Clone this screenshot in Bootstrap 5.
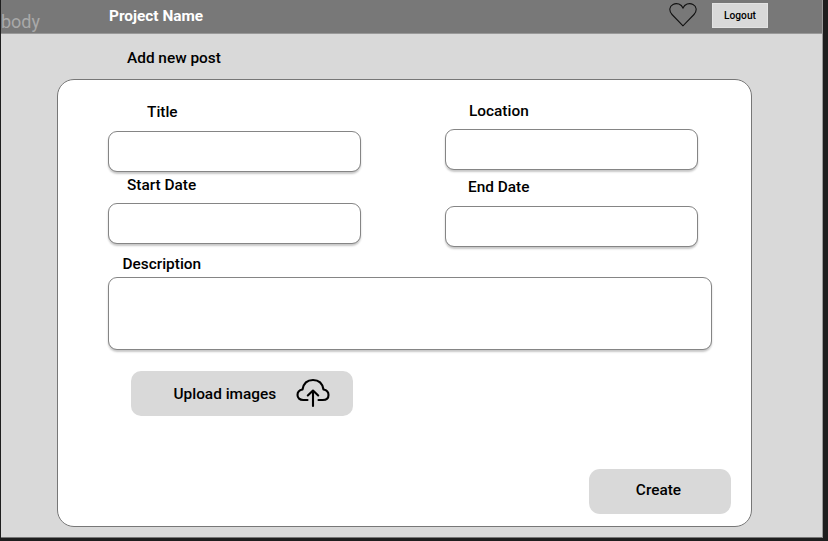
<!DOCTYPE html>
<html lang="en">
<head>
<meta charset="utf-8">
<meta name="viewport" content="width=device-width, initial-scale=1">
<title>Add new post</title>
<link href="https://cdn.jsdelivr.net/npm/bootstrap@5.3.0/dist/css/bootstrap.min.css" rel="stylesheet">
<style>
body{background:#1e1e1e;font-family:Roboto,sans-serif;font-size:15.4px;font-weight:500;line-height:20px;color:#000;height:541px;overflow:hidden}
.page{width:822px;height:538px;margin-left:1px;background:#d9d9d9;border-right:1px solid #999;border-bottom:1px solid #777}
.topbar{height:34px;background:#787878;border-bottom:1px solid #999;padding:0 54px 0 0}
.watermark{font-size:18px;font-weight:400;color:#a9a9a9;width:108px;padding-top:8px}
.brand{font-size:15.4px;font-weight:700;color:#fff;padding-top:9px}
.heart{margin-top:3px}
.btn-logout{width:56px;height:25px;margin:3px 0 0 15px;font-size:10.2px;font-weight:500;line-height:12px;background:#d9d9d9;border:1px solid #e3e3e3;color:#000}
.heading{font-size:15.4px;font-weight:500;line-height:20px;margin:14px 0 11px 126px}
.panel{width:695px;height:448px;margin-left:56px;border:1px solid #777;border-radius:17px;background:#fff;padding:0 20px 12px 50px}
.col-left{width:253px;padding-top:22px}
.col-right{width:253px;margin-left:84px;padding-top:21px}
.form-label{line-height:20px;margin:0;display:block}
.field{height:41px;border:1px solid #858585;border-radius:9px;box-shadow:0 2px 2px rgba(0,0,0,.22);padding:4px 12px;resize:none}
.l-title{margin:0 0 9px 39px}
.l-start{margin:3px 0 8px 19px}
.l-loc{margin:0 0 8px 24px}
.l-end{margin:7px 0 9px 23px}
.l-desc{margin:7px 0 3px 14.5px}
.field-tall{width:604px;height:73px}
.btn-soft{background:#d9d9d9;color:#000;border:0;border-radius:10px;font-size:15.4px;font-weight:500;line-height:20px}
.btn-upload{width:222px;height:45px;margin:21px 0 0 22.5px;padding:0 23px 0 43px}
.btn-upload svg{margin-bottom:2px}
.btn-create{width:142px;height:45px;border-radius:11px;padding:0 3px 3px 0}
</style>
<script src="https://cdn.jsdelivr.net/npm/bootstrap@5.3.0/dist/js/bootstrap.bundle.min.js"></script>
</head>
<body>
<div class="page">
  <header class="topbar d-flex align-items-start">
    <span class="watermark lh-base">body</span>
    <span class="brand me-auto lh-1">Project Name</span>
    <svg class="heart" width="28" height="24" viewBox="0 0 28 24" fill="none" stroke="#111" stroke-width="1.1"><path d="M14 22.800 3 11.500C-.3 8 .3 3.200 4 1.400 8-.4 12.300 1.200 14 5 15.700 1.200 20-.4 24 1.400 27.700 3.200 28.300 8 25 11.500Z"/></svg>
    <button class="btn btn-logout rounded-0 p-0" type="button">Logout</button>
  </header>
  <h1 class="heading">Add new post</h1>
  <form class="panel d-flex flex-column align-items-start">
    <div class="d-flex">
      <div class="col-left">
        <label class="form-label l-title" for="t">Title</label>
        <input class="form-control field" id="t">
        <label class="form-label l-start" for="s">Start Date</label>
        <input class="form-control field" id="s">
      </div>
      <div class="col-right">
        <label class="form-label l-loc" for="l">Location</label>
        <input class="form-control field" id="l">
        <label class="form-label l-end" for="e">End Date</label>
        <input class="form-control field" id="e">
      </div>
    </div>
    <label class="form-label l-desc" for="d">Description</label>
    <textarea class="form-control field field-tall" id="d"></textarea>
    <button class="btn btn-soft btn-upload d-flex align-items-center justify-content-between" type="button">Upload images
      <svg width="34" height="30" viewBox="0 0 34 30" fill="none" stroke="#000" stroke-width="2.100" stroke-linecap="round" stroke-linejoin="round"><path d="M11.500 22H7.200C3.700 22 1.500 20 1.500 17S4 12 6.500 11.500C7.500 5.500 11.500 2 17 2S26.500 5.500 27.500 11.500C30 12 32.500 14 32.500 17S30.300 22 26.800 22H22.500M17 28V13M11.800 17.500 17 12.500 22.200 17.500"/></svg>
    </button>
    <button class="btn btn-soft btn-create mt-auto ms-auto" type="submit">Create</button>
  </form>
</div>
</body>
</html>
